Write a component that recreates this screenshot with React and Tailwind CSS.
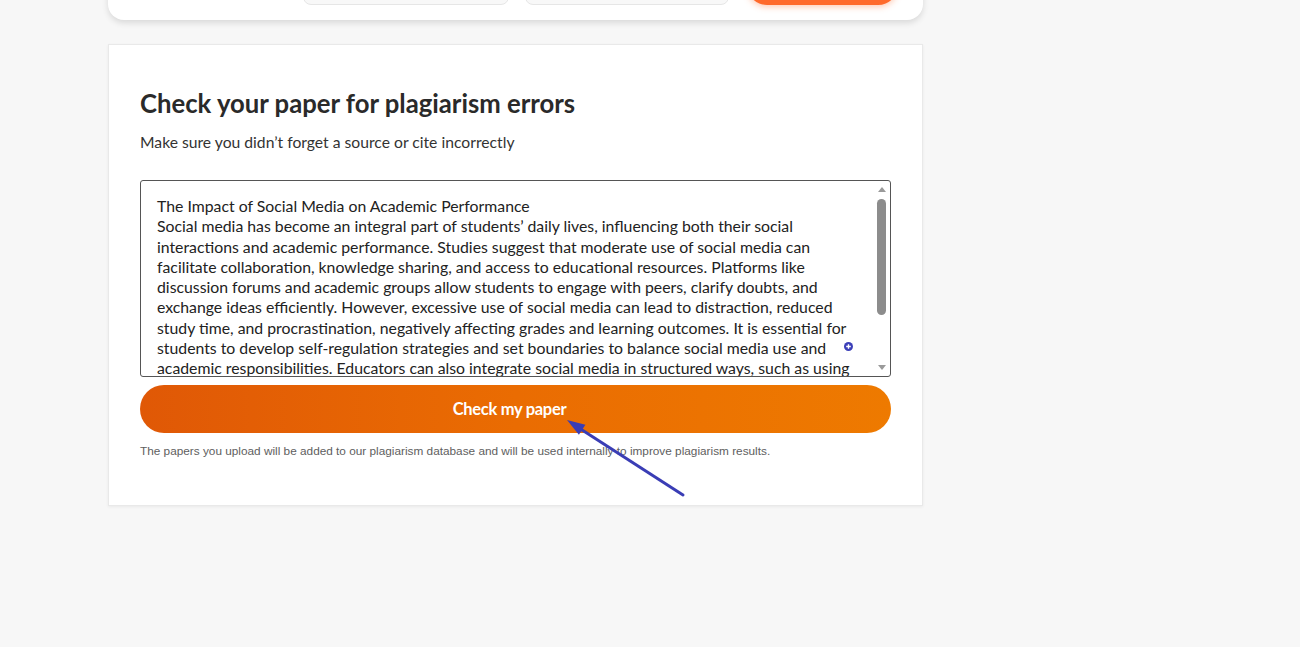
import React from "react";

const essay = `The Impact of Social Media on Academic Performance
Social media has become an integral part of students’ daily lives, influencing both their social interactions and academic performance. Studies suggest that moderate use of social media can facilitate collaboration, knowledge sharing, and access to educational resources. Platforms like discussion forums and academic groups allow students to engage with peers, clarify doubts, and exchange ideas efficiently. However, excessive use of social media can lead to distraction, reduced study time, and procrastination, negatively affecting grades and learning outcomes. It is essential for students to develop self-regulation strategies and set boundaries to balance social media use and academic responsibilities. Educators can also integrate social media in structured ways, such as using online discussion groups for coursework.`;

const Scrollbar = () => (
  <div className="w-[17px] flex flex-col items-center pt-[2px] pb-[2px]">
    <svg width="10" height="8" viewBox="0 0 10 8" className="mt-[3px]">
      <path d="M5 1 L9 6 L1 6 Z" fill="#9a9a9a" />
    </svg>
    <div className="w-[9px] h-[116px] mt-[5px] rounded-full bg-[#8c8c8c]" />
    <div className="flex-1" />
    <svg width="10" height="8" viewBox="0 0 10 8" className="mb-[3px]">
      <path d="M1 2 L9 2 L5 7 Z" fill="#9a9a9a" />
    </svg>
  </div>
);

export default function App() {
  return (
    <div className="min-h-[647px] overflow-hidden bg-[#f7f7f7] pl-[108px] font-['Lato',sans-serif]">
      <div className="w-[815px]">
        {/* top card, mostly scrolled away */}
        <div className="h-[80px] -mt-[60px] bg-white rounded-b-[16px] shadow-[0_3px_6px_rgba(0,0,0,0.12)] flex items-end pb-[15px] pl-[195px] gap-4">
          <div className="w-[206px] h-[40px] bg-[#f8f8f8] border border-[#e6e6e6] rounded-[8px]" />
          <div className="w-[204px] h-[40px] bg-[#f8f8f8] border border-[#e6e6e6] rounded-[8px]" />
          <div className="ml-[2px] w-[151px] h-[40px] bg-[#ff6a2c] rounded-full shadow-[0_2px_6px_rgba(255,106,44,0.35)]" />
        </div>

        {/* main card */}
        <div className="relative mt-[24px] bg-white border border-[#e9e9e9] shadow-[0_1px_3px_rgba(0,0,0,0.06)] px-[31px] pt-[43px] pb-[47px]">
          <h1 className="text-[25.7px] leading-[30px] font-bold text-[#2a2a2a]">
            Check your paper for plagiarism errors
          </h1>
          <p className="mt-[13px] text-[15.7px] leading-[22px] text-[#333]">
            Make sure you didn’t forget a source or cite incorrectly
          </p>

          <div className="relative mt-[27px] h-[197px] border border-[#555] rounded-[3px] flex">
            <div className="flex-1 overflow-hidden pl-[16px] pr-[14px] pt-[15px] text-[15.8px] leading-[20.3px] text-[#222] whitespace-pre-line">
              {essay}
            </div>
            <Scrollbar />
            <svg className="absolute left-[703px] top-[161px]" width="9" height="9" viewBox="0 0 9 9">
              <circle cx="4.5" cy="4.5" r="4.5" fill="#3b3fb8" />
              <path d="M4.5 2.2 V6.8 M2.2 4.5 H6.8" stroke="#fff" strokeWidth="1.4" />
            </svg>
          </div>

          <button className="mt-[8px] w-full h-[48px] pr-[12px] rounded-full bg-gradient-to-r from-[#e05806] via-[#ea6c02] to-[#ee7a00] text-white text-[16.5px] font-bold tracking-[-0.3px]">
            Check my paper
          </button>

          <p className="mt-[11px] text-[11.8px] leading-[14px] text-[#5e5e5e] font-['Liberation_Sans',sans-serif]">
            The papers you upload will be added to our plagiarism database and will be used internally to improve plagiarism results.
          </p>

          <svg
            className="absolute left-[450px] top-[368px] pointer-events-none"
            width="130"
            height="90"
            viewBox="0 0 130 90"
          >
            <line x1="20" y1="15" x2="124" y2="82" stroke="#3a3db5" strokeWidth="3" strokeLinecap="round" />
            <path d="M8 7 L26.4 11.8 L19.9 21.8 Z" fill="#3a3db5" />
          </svg>
        </div>
      </div>
    </div>
  );
}
